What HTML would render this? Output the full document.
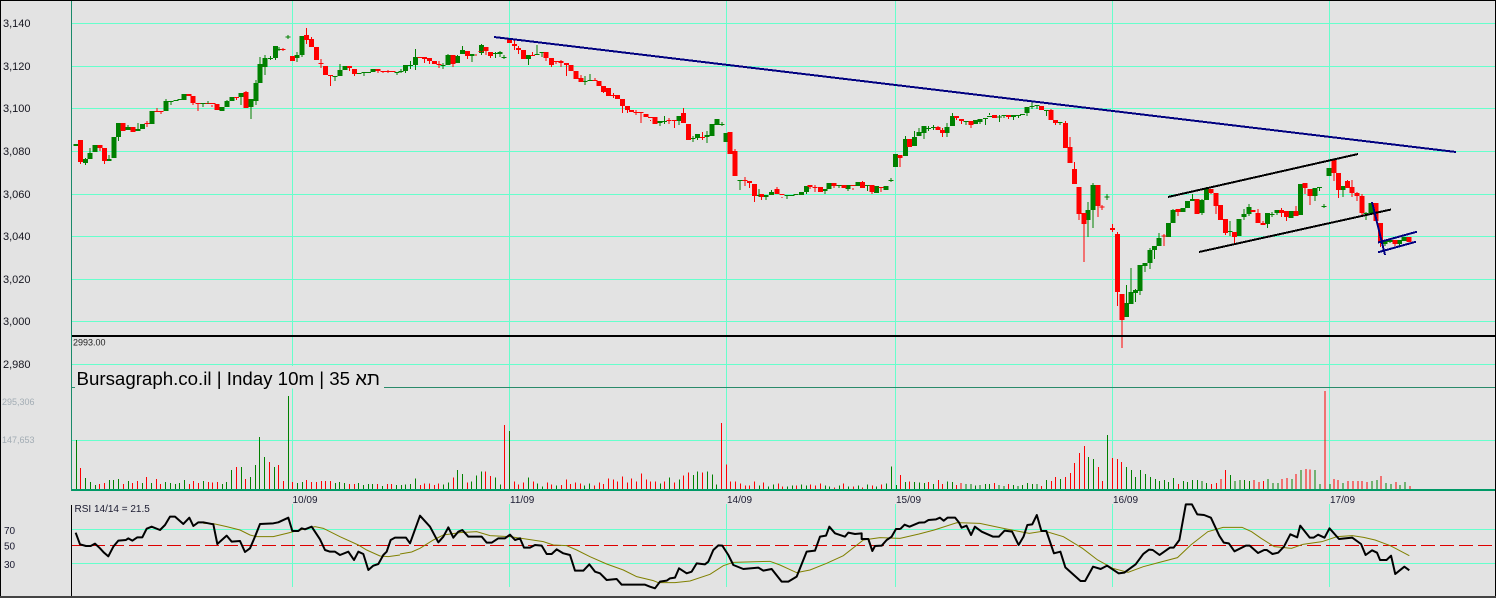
<!DOCTYPE html>
<html lang="en">
<head>
<meta charset="utf-8">
<title>Bursagraph chart</title>
<style>
html,body{margin:0;padding:0;background:#e3e3e3;width:1496px;height:598px;overflow:hidden}
svg{display:block}
text{font-family:"Liberation Sans",sans-serif}
.ns{vector-effect:non-scaling-stroke}
</style>
</head>
<body>
<svg width="1496" height="598" viewBox="0 0 1496 598" xmlns="http://www.w3.org/2000/svg">
<rect width="1496" height="598" fill="#e3e3e3"/>

<!-- grid -->
<g stroke="#66ffcc" stroke-width="1" shape-rendering="crispEdges" fill="none">
<path d="M72 23.5H1495M72 66.5H1495M72 108.5H1495M72 151.5H1495M72 194.5H1495M72 236.5H1495M72 279.5H1495M72 321.5H1495M72 364.5H1495M72 440.5H1495M72 529.5H1495M72 563.5H1495"/>
<path d="M292.5 1V489M509.5 1V489M726.5 1V489M895.5 1V489M1112.5 1V489M1329.5 1V489M292.5 504V587M509.5 504V587M726.5 504V587M895.5 504V587M1112.5 504V587M1329.5 504V587"/>
</g>
<path d="M72 387.5H1495" stroke="#2a8a6a" stroke-width="1" shape-rendering="crispEdges"/>
<rect x="75" y="366" width="309" height="22.5" fill="#e3e3e3"/>

<!-- candle bodies green -->
<path fill="none" stroke="#008000" stroke-width="5" shape-rendering="crispEdges" d="M76 144V146M85.5 159V163M90 153V159M95 145V152M109 159V161M114 137V158M118.5 123V137M128 127V130M138 129V131M142.5 124V129M152 111V124M166 101V111M171 101V102M176 100V101M180 99V100M184 94V100M203 103V104M222 107V111M227 101V107M232 97V101M241 93V97M251 99V107M256 83V101M260 64V83M265 58V67M270.5 58V59M275.5 46V58M279 49V50M288 36.5V37.5M297 55V58M302 36V55M335 76V77M340 70V76M345 66V70M359 73V74M364 72V73M368.5 72V73M373 69V72M397 72V73M401 71V72M405.5 65V71M410.5 65V66M415.5 57V65M443 65V66M448 55V65M457.5 56V63M462.5 50V54M472 54V56M481.5 45V53M495.5 53V54M500 52V54M504 57V58M528.5 55V59M537 54V55M542 52V53M585 81V82M590 80V81M660 121V123M664.5 121V122M679 116V121M693 138V139M697.5 134V138M707 135V137M712 124V136M717 119V125M722 124V125M726 133V142M740 180V181M759 195V196M766 195V197M771.5 192V195M787 195V196M792 195V196M796 194V195M801.5 192V195M806.5 186V192M825 189V191M829 183V189M839 185V186M848 185V189M858 182V186M867.5 185V186M876.5 186V193M886 186V190M891 180V181M895.5 154V167M905.5 139V156M914.5 137V146M919 132V136M924 126V133M928.5 128V129M933.5 127V128M947 127V133M952.5 116V126M966 121V122M975.5 120V124M980 119V122M985.5 118V119M989.5 116V117M999.5 116.5V117.5M1004 115V116M1013.5 115V117M1018.5 115V116M1022.5 114V115M1027 107V113M1032 106V107M1037 105V106M1046.5 110V111M1060 122V123M1088 210V220M1093 185V210M1107 196.5V197.5M1126.5 303V317M1131 292V304M1135.5 290V293M1140 265V291M1145 263V266M1150 250V263M1154.5 246V250M1159 238V246M1168.5 223V237M1173 210V223M1183 208V212M1187.5 201V208M1192.5 199V201M1202 200V213M1206.5 189V200M1230 231V232M1239 219V236M1244 214V217M1249 207V214M1267.5 213V224M1272 214V215M1277 210V213M1291 211V218M1300.5 184V215M1315 188V196M1319.5 187V188M1324 206V207M1329 168V176M1343 186V190M1366 213V214M1371 203V213M1385 241V244M1390 240V242M1399.5 240V244M1404 237V241"/>

<!-- candle bodies red -->
<path fill="none" stroke="#ff0000" stroke-width="5" shape-rendering="crispEdges" d="M80.5 140V162M100 145V148M104.5 148V161M123 123V131M133 127V132M147 123V124M157 111V112M161 111V112M189 94V96M193 96V103M198 103V104M208 103V104M213 103V104M217 104V110M236.5 97V98M246 92V108M283 49V50M292.5 56V61M306.5 35V40M311.5 39V47M316.5 47V60M321 63V64M325.5 66V75M330.5 75V76M349.5 66V68M354.5 69V74M378 69V71M383 71V72M388 71V72M393 71V72M420 57V58M424.5 57V59M429.5 58V61M434.5 61V64M439 64V65M453 55V64M467.5 51V56M481 51V52M486 47V51M490.5 52V56M509.5 39V43M514.5 44V46M518.5 48V50M523.5 50V59M532.5 55V56M546 52V58M551.5 58V65M556 61V62M561 61V63M566.5 63V65M571 65V71M576 71V79M581 78V82M595 80V81M599 81V86M603.5 86V92M608.5 88V96M613.5 95V96M617.5 95V99M622.5 99V106M627.5 106V110M631.5 110V112M636 112V113M641 112V113M646 114V117M650.5 117V118M655 117V124M669 120V121M674.5 120V121M683.5 113V123M688.5 124V140M702.5 137V138M730 132V154M735 151V176M745 180V181M749.5 181V183M754.5 184V196M761.5 194V197M777 189V194M782 194V195M810 185V187M815 187V188M820.5 187V192M834 183V186M844 185V188M853 185V186M862.5 182V188M872 185V192M881 187V188M900 155V158M909.5 139V147M938 127V130M942.5 130V133M956.5 116V118M961.5 119V121M971 121V125M994.5 115V118M1008.5 115V117M1041.5 106V110M1051 110V120M1055.5 120V123M1065.5 123V148M1070 147V163M1074.5 169V184M1079 187V214M1084 213V224M1098 185V206M1102 206.5V207.5M1112.3 228V230M1117.3 234V292M1122 294V320M1164 235.5V236.5M1178 209V212M1197 199V214M1211 189V193M1216 193V206M1220.5 205V220M1225.5 219V233M1234.5 232V237M1253 210V212M1258 213V223M1263 223V225M1281.5 210V213M1286.5 211V217M1296 211V216M1305 183V188M1310 189V196M1334 159V173M1338.5 173V190M1347.5 181V188M1352 187V193M1357 193V196M1362 196V213M1376 203V221M1380.5 223V243M1395 240V244M1409 237V242"/>

<!-- wicks green -->
<path fill="none" stroke="#008000" stroke-width="1" shape-rendering="crispEdges" d="M85.5 158V165M90 148V159M109 155V161M118.5 137V141M128 125V130M138 123V131M166 99V101M171 102V105M203 104V107M208 101V104M227 100V101M241 97V105M251 107V119M256 80V83M256 101V105M260 57V64M265 55V58M265 67V75M270.5 56V60M275.5 58V60M279 47V51M288 35V39M297 52V62M302 55V57M335 77V81M340 64V70M364 73V76M397 73V75M401 69V73M405.5 71V73M410.5 61V69M415.5 49V70M443 63V69M448 54V55M457.5 55V56M462.5 46V50M472 56V62M481.5 44V55M495.5 52V58M500 51V57M504 55V59M528.5 59V65M537 45V55M542 53V57M585 76V85M590 74V80M660 123V126M664.5 116V124M679 121V125M693 136V142M697.5 138V140M707 131V143M722 122V126M740 181V190M759 189V197M766 197V200M771.5 190V192M787 195V199M806.5 192V194M825 191V194M839 186V188M848 189V191M867.5 186V191M891 178V182M905.5 136V139M914.5 131V137M919 128V132M924 133V139M928.5 126V131M933.5 125V130M947 123V127M947 133V137M952.5 113V116M966 122V125M980 122V124M985.5 119V125M989.5 113V115M999.5 115V122M1004 116V118M1013.5 117V120M1018.5 116V118M1027 113V116M1032 102V109M1037 106V109M1046.5 111V116M1060 123V125M1088 202V237M1093 183V228M1107 194V200M1126.5 285V303M1131 268V292M1135.5 289V302M1140 291V295M1145 266V272M1150 248V269M1154.5 250V259M1159 233V238M1173 209V210M1192.5 194V199M1202 199V215M1206.5 187V189M1230 221V236M1244 209V220M1249 204V216M1267.5 224V228M1272 212V217M1277 213V215M1315 196V201M1319.5 188V191M1324 204V208M1343 190V197M1366 212V220M1385 244V246M1390 242V243M1399.5 244V246"/>

<!-- wicks red -->
<path fill="none" stroke="#ff0000" stroke-width="1" shape-rendering="crispEdges" d="M80.5 162V164M100 148V151M104.5 161V164M147 121V127M157 108V112M161 112V114M193 103V105M198 104V111M212 105V107M236.5 98V100M246 91V92M283 48V51M306.5 28V35M306.5 40V44M311.5 37V39M321 59V68M330.5 76V86M349.5 68V71M354.5 74V76M378 71V73M383 72V73M388 70V73M424.5 59V63M429.5 61V64M439 61V68M453 64V67M467.5 56V59M476 54V56M486 51V55M490.5 56V58M514.5 40V50M518.5 46V54M532.5 52V56M546 58V61M551.5 65V67M556 62V64M561 60V67M566.5 65V76M581 75V78M595 78V80M603.5 92V93M613.5 93V98M622.5 106V113M627.5 110V113M636 110V115M641 113V123M650.5 120V121M669 118V124M674.5 121V128M683.5 108V113M702.5 132V140M735 149V151M745 177V186M749.5 183V188M754.5 196V202M761.5 197V200M777 187V189M782 197V198M810 187V189M815 185V192M834 186V188M853 188V190M862.5 181V182M872 192V194M881 188V192M900 158V167M938 126V127M942.5 128V137M956.5 118V120M961.5 121V124M971 125V128M1008.5 117V119M1051 109V110M1055.5 123V125M1065.5 121V123M1070 137V147M1074.5 162V169M1079 214V220M1084 224V262M1098 206V217M1102 205V210M1112.3 224V232M1117.3 232V234M1117.3 292V306M1122 320V348M1164 234V246M1178 212V216M1211 193V194M1216 206V214M1225.5 233V235M1234.5 237V244M1258 209V213M1263 221V223M1281.5 208V217M1286.5 217V221M1296 206V211M1305 188V194M1310 196V205M1334 173V181M1338.5 190V198M1347.5 180V181M1352 180V197M1357 192V201M1362 194V196M1362 213V216M1380.5 243V247M1395 244V246"/>

<!-- level line and trend lines -->
<path d="M72 336H1495" stroke="#000" stroke-width="2" shape-rendering="crispEdges"/>
<g fill="none" stroke-width="2" shape-rendering="crispEdges">
<path d="M1168 197L1358 154M1199 252L1391 209.5" stroke="#000"/>
<path d="M494 37L1456 152M1372 202L1385 255M1378 242.5L1417 231.7M1378 252.3L1416 241.7" stroke="#000080"/>
</g>

<!-- volume -->
<g fill="none" shape-rendering="crispEdges">
<g transform="translate(0,330) scale(.33333)" stroke-width="3">
<path stroke="#008000" d="M229 330V478M256 444V478M271 456V478M286 465V478M328 450V478M340 450V478M355 447V478M385 453V478M427 459V478M454 459V478M496 456V478M511 459V478M526 462V478M538 459V478M553 450V478M610 453V478M667 462V478M679 456V478M694 420V478M724 411V478M751 441V478M766 405V478M778 321V478M793 381V478M823 411V478M865 198V478M892 459V478M907 456V478M1006 459V478M1018 456V478M1033 459V478M1075 459V478M1090 465V478M1105 462V478M1117 462V478M1147 468V478M1189 465V478"/>
<path stroke="#ff0000" d="M241 414V478M298 462V478M313 459V478M370 462V478M397 459V478M412 453V478M439 441V478M469 447V478M481 462V478M568 462V478M580 453V478M595 459V478M625 456V478M637 458V478M652 456V478M709 411V478M736 447V478M808 396V478M835 405V478M850 453V478M877 456V478M919 450V478M934 456V478M949 456V478M964 453V478M976 453V478M991 453V478M1048 462V478M1063 462V478M1132 462V478M1162 462V478M1174 462V478"/>
</g>
<g transform="translate(400,390) scale(.33333)" stroke-width="3">
<path stroke="#008000" d="M4 285V298M16 283V298M31 282V298M46 265V298M130 283V298M145 277V298M172 240V298M187 252V298M214 274V298M229 256V298M244 244V298M286 262V298M301 283V298M328 123V298M385 262V298M412 280V298M427 289V298M469 286V298M553 286V298M568 280V298M781 280V298M808 262V298M838 268V298M880 255V298M892 244V298M922 244V298M937 253V298M949 283V298M1078 286V298M1105 289V298M1120 283V298M1162 289V298M1177 286V298M1204 283V298M1219 286V298M1276 286V298M1288 289V298M1318 286V298M1345 289V298M1375 286V298M1402 283V298M1429 289V298M1459 280V298M1474 229V298M1489 285V298"/>
<path stroke="#ff0000" d="M61 285V298M73 280V298M88 280V298M103 285V298M115 280V298M160 262V298M202 277V298M256 244V298M271 258V298M313 105V298M343 274V298M355 283V298M370 277V298M400 274V298M442 277V298M454 283V298M484 285V298M499 268V298M511 282V298M526 277V298M541 280V298M583 286V298M598 277V298M610 282V298M625 265V298M640 268V298M652 274V298M667 259V298M682 277V298M694 265V298M709 274V298M724 250V298M739 268V298M751 274V298M766 274V298M793 274V298M823 277V298M850 256V298M865 247V298M907 247V298M964 99V298M979 223V298M991 274V298M1006 274V298M1021 280V298M1036 286V298M1048 286V298M1063 274V298M1090 277V298M1135 280V298M1147 289V298M1189 286V298M1231 283V298M1246 286V298M1261 280V298M1303 292V298M1330 280V298M1360 289V298M1387 292V298M1417 286V298M1444 283V298"/>
</g>
<g transform="translate(900,390) scale(.38008,.33333)" stroke-width="2.631">
<path stroke="#008000" d="M14 276V298M38 276V298M51 277V298M64 279V298M88 282V298M125 274V298M138 276V298M174 282V298M187 282V298M198 286V298M211 285V298M225 282V298M236 282V298M261 285V298M274 288V298M298 285V298M311 288V298M322 285V298M335 279V298M348 282V298M361 282V298M385 270V298M422 267V298M496 201V298M509 207V298M546 135V298M596 231V298M609 240V298M620 261V298M633 240V298M646 252V298M659 261V298M672 267V298M683 273V298M696 270V298M707 276V298M720 264V298M746 273V298M757 276V298M770 270V298M783 270V298M794 273V298M807 279V298M870 255V298M881 273V298M894 270V298M907 270V298M920 273V298M968 267V298M981 279V298M994 279V298M1031 267V298M1055 240V298M1092 240V298M1105 282V298M1131 282V298M1166 279V298M1242 273V298M1255 270V298M1279 279V298M1292 282V298M1316 285V298M1329 276V298"/>
<path stroke="#ff0000" d="M1 255V298M25 274V298M75 276V298M101 270V298M112 282V298M149 285V298M161 279V298M248 279V298M285 282V298M372 288V298M398 273V298M409 261V298M435 261V298M448 249V298M459 219V298M472 189V298M485 168V298M522 231V298M533 273V298M559 204V298M572 207V298M583 216V298M733 282V298M820 282V298M833 279V298M844 267V298M857 240V298M931 270V298M944 276V298M957 273V298M1005 267V298M1018 264V298M1042 252V298M1068 237V298M1079 238V298M1118 3V298M1142 267V298M1153 270V298M1179 273V298M1192 273V298M1205 273V298M1216 273V298M1229 276V298M1266 258V298M1305 276V298M1342 288V298"/>
</g>
</g>
<path d="M71 490H1495" stroke="#009966" stroke-width="2" shape-rendering="crispEdges"/>
<path d="M71.5 1V491" stroke="#1a8a6a" stroke-width="1" shape-rendering="crispEdges"/>

<!-- RSI -->
<path d="M72 545.5H1495" stroke="#dd0000" stroke-width="1" stroke-dasharray="14 5" shape-rendering="crispEdges"/>
<g fill="none" stroke="#808000" stroke-width="1">
<polyline class="ns" transform="translate(0,330) scale(.33333)" points="610,580 640,581 680,590 720,600 750,615 770,620 820,620 860,610 900,600 945,590 970,595 1020,620 1075,645 1100,660 1140,678 1165,680 1200,675"/>
<polyline class="ns" transform="translate(400,390) scale(.33333)" points="0,492 35,486 60,475 100,450 130,435 180,428 230,425 270,437 330,440 430,455 460,465 500,467 530,480 570,500 620,522 670,540 710,560 760,572 775,578 825,578 870,573 930,553 970,527 1000,517 1110,514 1140,525 1190,548 1230,540 1280,520 1330,497 1390,450 1440,443 1500,445"/>
<polyline class="ns" transform="translate(900,390) scale(.38008,.33333)" points="0,445 50,432 90,420 150,398 210,400 280,417 340,430 380,423 430,440 480,475 520,510 560,535 600,547 640,530 680,518 730,503 765,465 810,425 850,412 900,412 925,425 950,445 985,470 1030,475 1060,463 1110,455 1150,440 1190,437 1220,442 1250,450 1290,467 1340,497"/>
</g>
<g fill="none" stroke="#000" stroke-width="2" stroke-linejoin="round">
<polyline class="ns" transform="translate(0,330) scale(.33333)" points="227,608 240,643 258,648 272,648 285,641 300,655 312,668 325,679 340,650 355,632 378,630 385,625 397,632 412,622 427,622 440,596 455,590 480,600 495,585 510,560 525,560 550,582 568,563 580,588 595,577 610,577 640,583 652,642 680,617 695,635 720,633 735,666 750,655 765,620 780,582 820,580 835,577 865,563 877,603 895,603 905,595 915,598 935,590 960,628 975,660 990,665 1005,665 1020,675 1045,665 1062,690 1075,665 1090,672 1105,720 1120,707 1135,702 1150,675 1160,665 1172,630 1185,623 1200,623"/>
<polyline class="ns" transform="translate(400,390) scale(.33333)" points="0,443 18,443 30,460 60,377 90,410 115,457 130,440 145,412 160,443 175,425 187,420 205,440 245,440 260,458 275,458 295,445 315,445 330,434 345,450 360,445 372,473 390,473 405,465 425,467 440,492 455,492 470,478 490,490 510,495 525,542 550,542 568,523 585,545 600,550 620,570 650,567 665,584 735,584 750,590 765,595 780,575 800,572 810,565 825,563 837,535 860,550 875,545 890,520 915,523 925,515 940,480 955,466 967,467 985,495 1000,525 1030,537 1075,533 1090,542 1115,537 1145,575 1165,575 1190,560 1220,485 1245,482 1260,440 1278,437 1288,410 1305,430 1335,440 1345,428 1365,432 1385,430 1385,447 1405,447 1417,483 1425,468 1445,467 1460,450 1475,440 1488,417 1500,417"/>
<polyline class="ns" transform="translate(900,390) scale(.38008,.33333)" points="0,418 12,404 25,410 50,398 65,397 75,390 95,388 105,383 115,392 125,383 145,383 155,397 162,413 175,407 187,435 197,410 215,425 245,440 260,440 275,422 295,425 312,465 325,440 335,405 348,403 360,375 372,423 385,423 405,490 422,485 435,532 475,573 487,573 508,530 528,537 545,527 575,550 590,548 620,523 640,492 655,479 665,480 683,495 710,473 720,473 735,450 752,343 768,343 782,373 800,375 818,383 840,437 852,458 865,460 880,484 910,467 920,467 942,489 958,480 965,480 980,492 995,488 1010,470 1027,433 1045,442 1053,407 1078,443 1088,443 1100,434 1117,443 1130,415 1155,447 1190,443 1213,462 1225,495 1242,481 1255,488 1263,510 1280,510 1292,497 1303,552 1327,530 1340,541"/>
</g>
<path d="M71.5 505V596" stroke="#000" stroke-width="1" shape-rendering="crispEdges"/>

<!-- text -->
<g font-size="11" fill="#15151f">
<text x="3" y="27">3,140</text>
<text x="3" y="70">3,120</text>
<text x="3" y="112">3,100</text>
<text x="3" y="155">3,080</text>
<text x="3" y="198">3,060</text>
<text x="3" y="240">3,040</text>
<text x="3" y="283">3,020</text>
<text x="3" y="325">3,000</text>
<text x="3" y="368">2,980</text>
</g>
<text x="73" y="345.5" font-size="9" fill="#222">2993.00</text>
<g font-size="9" fill="#a2acb4">
<text x="2" y="405">295,306</text>
<text x="2" y="443">147,653</text>
</g>
<text x="76.5" y="385" font-size="18.7" fill="#000">Bursagraph.co.il | Inday 10m | 35 תא</text>
<g font-size="10" fill="#1a1a30">
<text x="292.5" y="503">10/09</text>
<text x="510" y="503">11/09</text>
<text x="727" y="503">14/09</text>
<text x="896" y="503">15/09</text>
<text x="1113" y="503">16/09</text>
<text x="1330" y="503">17/09</text>
<text x="74.5" y="512">RSI 14/14 = 21.5</text>
<text x="4" y="534">70</text>
<text x="4" y="549.5">50</text>
<text x="4" y="568">30</text>
</g>

<!-- borders -->
<path d="M0 .5H1496M.5 0V598M1495.5 0V598" stroke="#000" stroke-width="1" shape-rendering="crispEdges"/>
<path d="M0 597H1496" stroke="#444" stroke-width="2" shape-rendering="crispEdges"/>
</svg>
</body>
</html>
